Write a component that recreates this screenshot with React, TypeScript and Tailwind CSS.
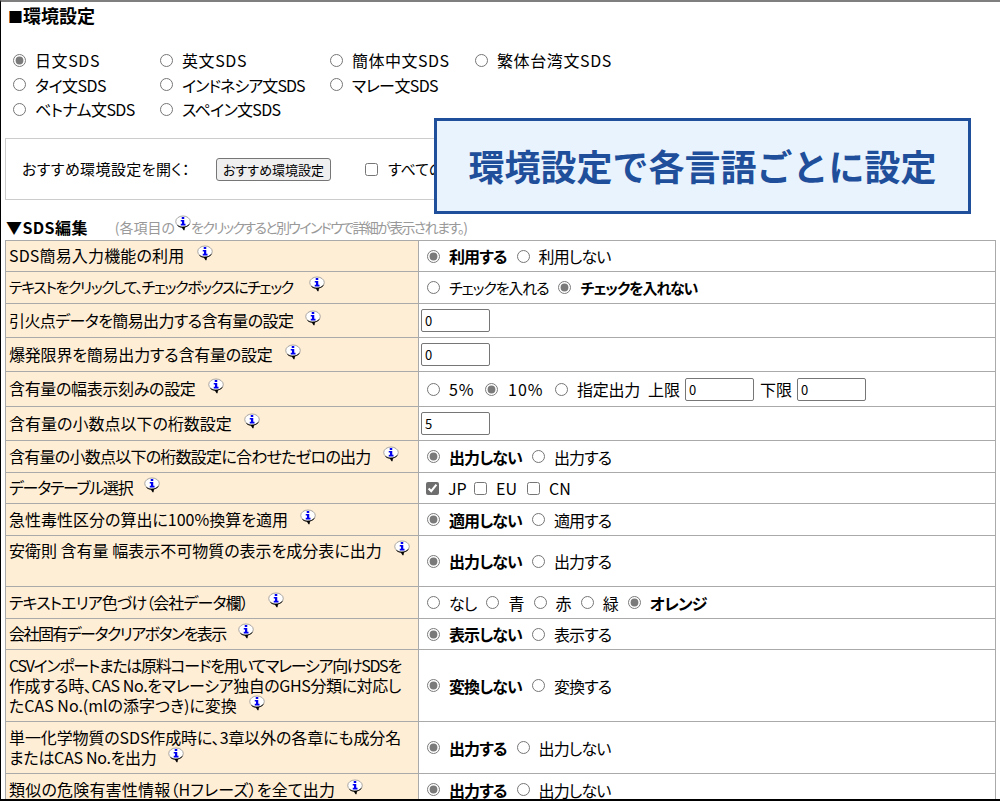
import React from "react";

const InfoIcon: React.FC<{ className?: string }> = ({ className = "" }) => (
  <svg viewBox="0 0 32 34" className={`inline-block w-[16px] h-[17px] ${className}`}>
    <ellipse cx="16" cy="13" rx="14.500" ry="11" fill="#fff" stroke="#8a8a8a" strokeWidth="1.500" />
    <path d="M5 21c3 2.500 6.500 3.500 10 3.500 5.500 0 10-1.500 14-6" fill="none" stroke="#000" strokeWidth="2" />
    <path d="M13 24l4 6.500h2l1-6.500z" fill="#000" />
    <rect x="13.500" y="4" width="5" height="4" fill="#0000f0" />
    <path d="M11.500 10h7v7.500h2.500V21H11.500v-3.500h2.500V13h-2.500z" fill="#0000f0" />
  </svg>
);

const Radio: React.FC<{ checked?: boolean; className?: string }> = ({ checked = false, className = "" }) => (
  <input
    type="radio"
    checked={checked}
    readOnly
    className={`w-[13px] h-[13px] m-0 shrink-0 accent-[#7a7a7a] ${className}`}
  />
);

const Check: React.FC<{ checked?: boolean; className?: string }> = ({ checked = false, className = "" }) => (
  <input
    type="checkbox"
    checked={checked}
    readOnly
    className={`w-[13px] h-[13px] m-0 shrink-0 accent-[#6e6e6e] ${className}`}
  />
);

const Field: React.FC<{ value: string; className?: string }> = ({ value, className = "" }) => (
  <input
    type="text"
    value={value}
    readOnly
    className={`w-[69px] h-[23px] border border-[#767676] rounded-[2px] px-[3px] text-[13px] bg-white ${className}`}
  />
);

const Options: React.FC<{ items: { label: string; checked?: boolean }[]; className?: string }> = ({
  items,
  className = "tracking-[-0.9px]",
}) => (
  <div className={`flex items-center pl-[8px] h-full ${className}`}>
    {items.map((item) => (
      <React.Fragment key={item.label}>
        <Radio checked={item.checked} />
        <span className={`ml-[9px] mr-[10px] ${item.checked ? "font-bold" : ""}`}>{item.label}</span>
      </React.Fragment>
    ))}
  </div>
);

const FieldCell: React.FC<{ value: string }> = ({ value }) => (
  <div className="flex items-center pl-[2px]">
    <Field value={value} />
  </div>
);

interface RowData {
  height: string;
  label: React.ReactNode;
  labelClass?: string;
  iconMargin?: string;
  top?: boolean;
  value: React.ReactNode;
}

const rows: RowData[] = [
  {
    height: "h-[31px]",
    label: "SDS簡易入力機能の利用",
    labelClass: "tracking-[0.15px]",
    iconMargin: "ml-[13px]",
    value: <Options items={[{ label: "利用する", checked: true }, { label: "利用しない" }]} />,
  },
  {
    height: "h-[32px]",
    label: "テキストをクリックして、チェックボックスにチェック",
    labelClass: "text-[15px] tracking-[-1.44px]",
    iconMargin: "ml-[16px]",
    value: (
      <Options
        className="text-[15px] tracking-[-1.15px]"
        items={[{ label: "チェックを入れる" }, { label: "チェックを入れない", checked: true }]}
      />
    ),
  },
  {
    height: "h-[34px]",
    label: "引火点データを簡易出力する含有量の設定",
    labelClass: "tracking-[-0.6px]",
    value: <FieldCell value="0" />,
  },
  {
    height: "h-[34px]",
    label: "爆発限界を簡易出力する含有量の設定",
    labelClass: "tracking-[-0.2px]",
    value: <FieldCell value="0" />,
  },
  {
    height: "h-[35px]",
    label: "含有量の幅表示刻みの設定",
    labelClass: "tracking-[-0.33px]",
    value: (
      <div className="flex items-center pl-[8px]">
        <Radio />
        <span className="ml-[9px] w-[36px] tracking-[0.8px]">5%</span>
        <Radio checked />
        <span className="ml-[10px] w-[47px] tracking-[1px]">10%</span>
        <Radio />
        <span className="ml-[9px] w-[71px] tracking-[-0.25px]">指定出力</span>
        <span className="w-[37px]">上限</span>
        <Field value="0" />
        <span className="ml-[6px] w-[37px]">下限</span>
        <Field value="0" />
      </div>
    ),
  },
  {
    height: "h-[34px]",
    label: "含有量の小数点以下の桁数設定",
    value: <FieldCell value="5" />,
  },
  {
    height: "h-[32px]",
    label: "含有量の小数点以下の桁数設定に合わせたゼロの出力",
    labelClass: "tracking-[-0.75px]",
    value: <Options items={[{ label: "出力しない", checked: true }, { label: "出力する" }]} />,
  },
  {
    height: "h-[31px]",
    label: "データテーブル選択",
    labelClass: "tracking-[-1.3px]",
    value: (
      <div className="flex items-center pl-[7px]">
        <Check checked />
        <span className="ml-[9px] w-[26px]">JP</span>
        <Check />
        <span className="ml-[9px] w-[31px]">EU</span>
        <Check />
        <span className="ml-[9px]">CN</span>
      </div>
    ),
  },
  {
    height: "h-[32px]",
    label: "急性毒性区分の算出に100%換算を適用",
    value: <Options items={[{ label: "適用しない", checked: true }, { label: "適用する" }]} />,
  },
  {
    height: "h-[51px]",
    label: "安衛則 含有量 幅表示不可物質の表示を成分表に出力",
    top: true,
    value: <Options items={[{ label: "出力しない", checked: true }, { label: "出力する" }]} />,
  },
  {
    height: "h-[32px]",
    label: "テキストエリア色づけ（会社データ欄）",
    labelClass: "tracking-[-0.9px]",
    iconMargin: "ml-[20px]",
    value: (
      <Options
        items={[
          { label: "なし" },
          { label: "青" },
          { label: "赤" },
          { label: "緑" },
          { label: "オレンジ", checked: true },
        ]}
      />
    ),
  },
  {
    height: "h-[31px]",
    label: "会社固有データクリアボタンを表示",
    labelClass: "tracking-[-1.55px]",
    value: <Options items={[{ label: "表示しない", checked: true }, { label: "表示する" }]} />,
  },
  {
    height: "h-[72px]",
    label: (
      <>
        <span className="tracking-[-1.3px]">CSVインポートまたは原料コードを用いてマレーシア向けSDSを</span>
        <br />
        <span className="tracking-[-0.4px]">作成する時、CAS No.をマレーシア独自のGHS分類に対応し</span>
        <br />
        たCAS No.(mlの添字つき)に変換
      </>
    ),
    value: <Options items={[{ label: "変換しない", checked: true }, { label: "変換する" }]} />,
  },
  {
    height: "h-[52px]",
    label: (
      <>
        <span className="tracking-[-0.12px]">単一化学物質のSDS作成時に、3章以外の各章にも成分名</span>
        <br />
        <span className="tracking-[-0.3px]">またはCAS No.を出力</span>
      </>
    ),
    value: <Options items={[{ label: "出力する", checked: true }, { label: "出力しない" }]} />,
  },
  {
    height: "h-[32px]",
    label: "類似の危険有害性情報（Hフレーズ）を全て出力",
    labelClass: "tracking-[0.2px]",
    value: <Options items={[{ label: "出力する", checked: true }, { label: "出力しない" }]} />,
  },
];

const languageRows = [
  [
    { label: "日文SDS", className: "tracking-[0.6px]" },
    { label: "英文SDS", className: "tracking-[0.6px]" },
    { label: "簡体中文SDS", className: "tracking-[0.5px]" },
    { label: "繁体台湾文SDS", className: "tracking-[0.6px]" },
  ],
  [
    { label: "タイ文SDS", className: "tracking-[-0.5px]" },
    { label: "インドネシア文SDS", className: "tracking-[-0.95px]" },
    { label: "マレー文SDS", className: "tracking-[-0.6px]" },
  ],
  [
    { label: "ベトナム文SDS", className: "tracking-[-0.6px]" },
    { label: "スペイン文SDS", className: "tracking-[-0.7px]" },
  ],
];

const App: React.FC = () => {
  return (
    <div className="relative w-[1000px] h-[801px] overflow-hidden bg-white text-black text-[16px] leading-[20px] border-t-2 border-t-[#7f7f7f] border-l border-l-black border-b-2 border-b-black font-['Noto_Sans_CJK_JP','Noto_Sans',sans-serif] [font-feature-settings:'palt']">
      <h1 className="pl-[7px] pt-[3px] h-[41px] font-bold text-[18px]">
        <span className="text-[15px]">■</span>環境設定
      </h1>

      <div className="grid grid-cols-[147px_170px_145px_1fr] pl-[12px] h-[95px] pt-[5px] auto-rows-[24.500px]">
        {languageRows.map((row, r) =>
          [0, 1, 2, 3].map((c) =>
            row[c] ? (
              <div key={`${r}-${c}`} className="flex items-center">
                <Radio checked={r === 0 && c === 0} />
                <span className={`ml-[9px] ${row[c].className}`}>{row[c].label}</span>
              </div>
            ) : (
              <div key={`${r}-${c}`} />
            ),
          ),
        )}
      </div>

      <div className="ml-[4px] w-[900px] h-[62px] border border-[#cccccc] flex items-center pl-[16px] text-[15px]">
        <span className="w-[194px] tracking-[0.4px] pb-[1px]">おすすめ環境設定を開く：</span>
        <button className="w-[115px] h-[23px] bg-[#efefef] border border-[#767676] rounded-[3px] text-[13px] leading-none">
          おすすめ環境設定
        </button>
        <Check className="ml-[34px]" />
        <span className="ml-[10px] pb-[1px]">すべての</span>
      </div>

      <div className="flex items-center h-[40px] pl-[5px] pt-[13px]">
        <span className="font-bold text-[16px] tracking-[0.4px]">▼SDS編集</span>
        <span className="ml-[27px] text-[14px] text-[#999999] flex items-center">
          (各項目の
          <InfoIcon className="-mt-[6px]" />
          <span className="tracking-[-1.65px]">をクリックすると別ウインドウで詳細が表示されます。)</span>
        </span>
      </div>

      <table className="ml-[4px] w-[991px] table-fixed border-collapse">
        <colgroup>
          <col className="w-[413px]" />
          <col />
        </colgroup>
        <tbody>
          {rows.map((row, i) => (
            <tr key={i} className={row.height}>
              <td
                className={`border border-[#aaaaaa] bg-[#ffeed6] pl-[3px] pr-0 whitespace-nowrap ${
                  row.top ? "align-top pt-[4px]" : "align-middle pb-[2px]"
                }`}
              >
                <span className={row.labelClass}>{row.label}</span>
                <InfoIcon className={`${row.iconMargin ?? "ml-[12px]"} align-[0px]`} />
              </td>
              <td className="border border-[#aaaaaa] p-0 align-middle">{row.value}</td>
            </tr>
          ))}
        </tbody>
      </table>

      <div className="absolute left-[433px] top-[116px] w-[537px] h-[96px] border-[3px] border-[#1f4e9a] bg-[#e8f3fd] flex items-center justify-center pb-[3px] text-[36px] font-bold text-[#1f4e9a] [font-feature-settings:normal]">
        環境設定で各言語ごとに設定
      </div>
    </div>
  );
};

export default App;
